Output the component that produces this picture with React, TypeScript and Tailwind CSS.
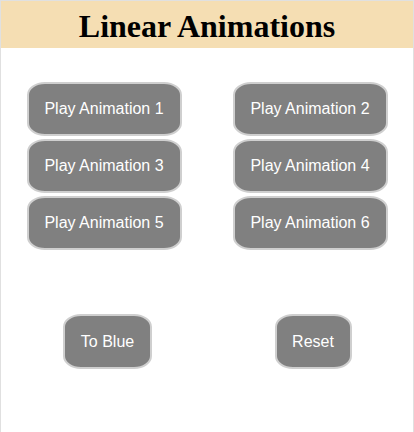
const btn =
  "flex items-center justify-center h-[54px] bg-[#808080] text-white text-[16px] border-2 border-[#cfcfcf] rounded-[18px/13px] font-['Liberation_Sans',Arial,sans-serif]";

export default function App() {
  const rows = [
    ["Play Animation 1", "Play Animation 2"],
    ["Play Animation 3", "Play Animation 4"],
    ["Play Animation 5", "Play Animation 6"],
  ];
  return (
    <div className="w-[414px] h-[432px] bg-white border border-b-0 border-[#e0e0e0] overflow-hidden">
      <div className="h-[47px] bg-[#f5deb3] flex items-center justify-center">
        <h1 className="font-['Liberation_Serif','Times_New_Roman',serif] font-bold text-[32px] leading-none text-black pt-[2px]">
          Linear Animations
        </h1>
      </div>
      <div className="flex flex-col gap-[3px] mt-[34px]">
        {rows.map((r) => (
          <div key={r[0]} className="grid grid-cols-2">
            {r.map((t) => (
              <div key={t} className="flex justify-center">
                <button className={`${btn} w-[155px]`}>{t}</button>
              </div>
            ))}
          </div>
        ))}
      </div>
      <div className="grid grid-cols-2 mt-[64px]">
        <div className="flex justify-center pl-[7px]">
          <button className={`${btn} w-[89px] h-[55px] rounded-[15px]`}>To Blue</button>
        </div>
        <div className="flex justify-center pl-[6px]">
          <button className={`${btn} w-[77px] h-[55px] rounded-[15px]`}>Reset</button>
        </div>
      </div>
    </div>
  );
}
